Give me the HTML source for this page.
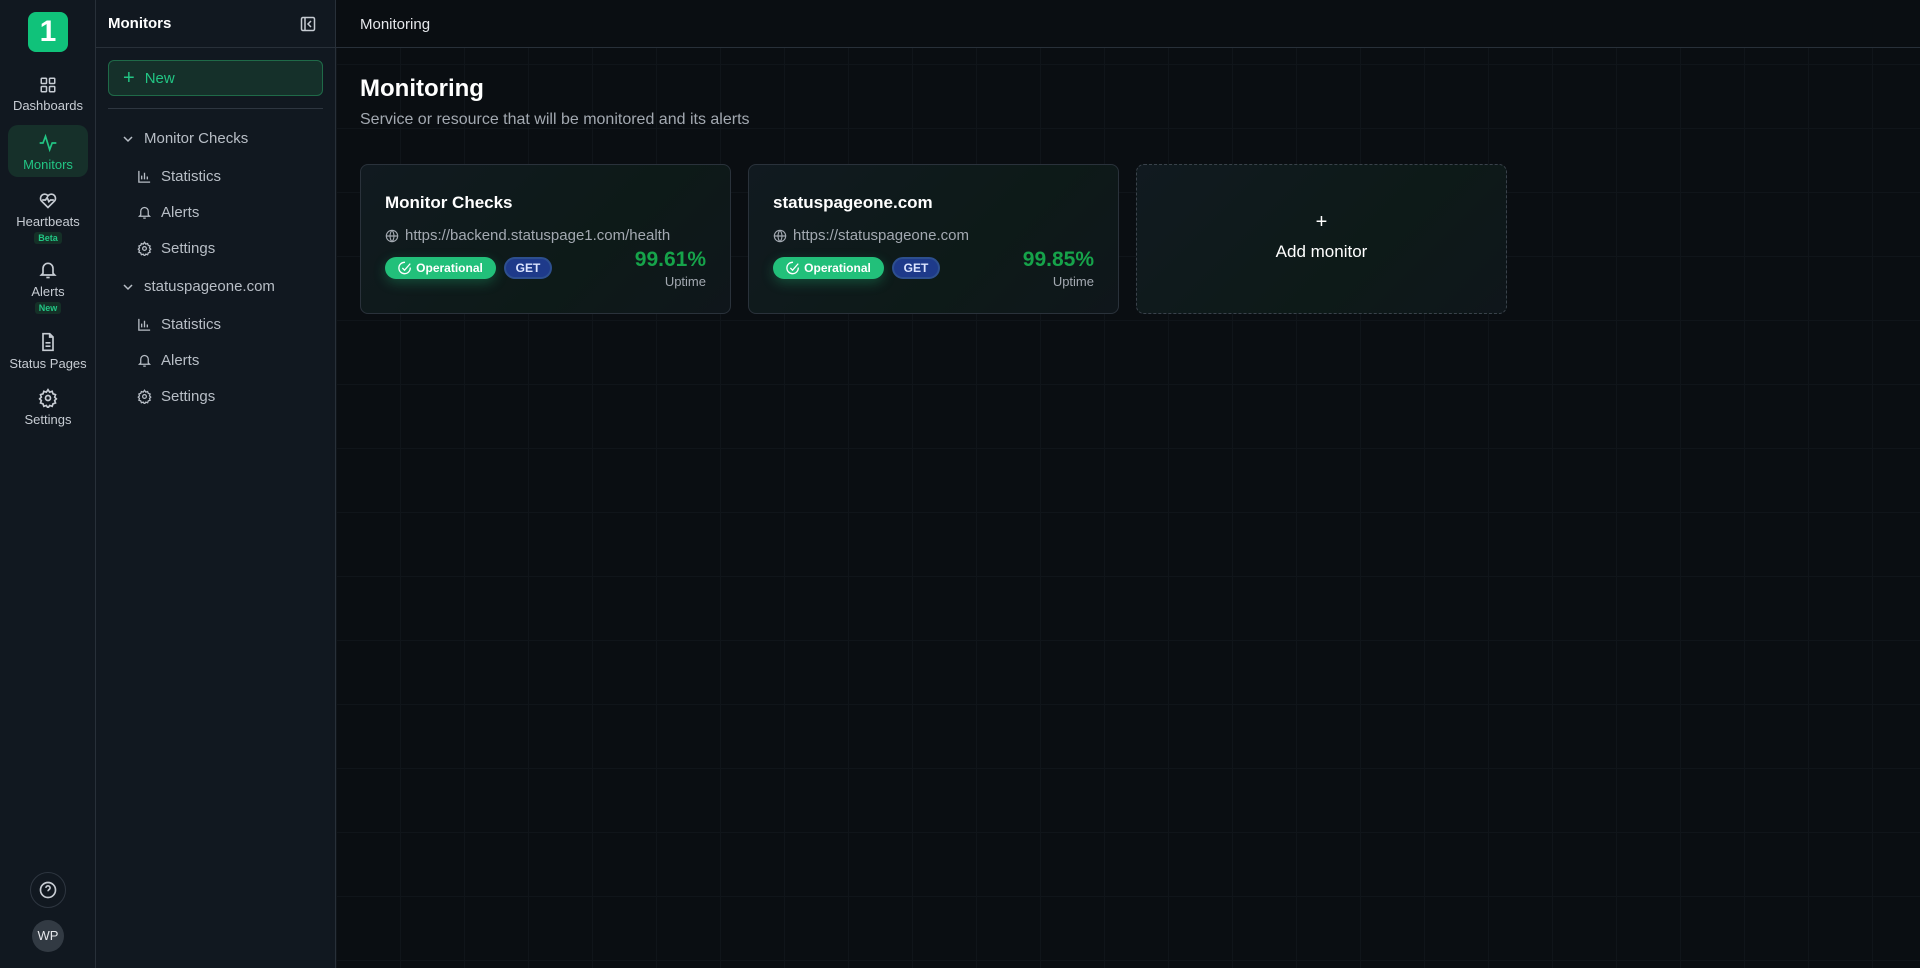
<!DOCTYPE html>
<html><head><meta charset="utf-8"><style>
*{box-sizing:border-box;margin:0;padding:0}
body{width:1920px;height:968px;overflow:hidden;background:#0a0e12;font-family:"Liberation Sans",sans-serif;color:#e5e7eb;position:relative}
.rail{position:absolute;left:0;top:0;width:96px;height:968px;background:#111820;border-right:1px solid #283039}
.logo{position:absolute;left:28px;top:12px;width:40px;height:40px;border-radius:8px;background:#10c27a;color:#fff;font-weight:bold;font-size:30px;text-align:center;line-height:40px}
.ri{position:absolute;left:8px;width:80px;text-align:center;font-size:13px;color:#c7ccd3}
.ri svg{display:block;margin:0 auto 4px}
.ri.act{background:#16302a;border-radius:10px;color:#22c584}
.bd{display:inline-block;font-size:9px;font-weight:bold;color:#22c584;background:#153027;border-radius:3px;padding:1px 4px;margin-top:2px}
.side{position:absolute;left:96px;top:0;width:240px;height:968px;background:#111820;border-right:1px solid #283039}
.main{position:absolute;left:336px;top:0;right:0;height:968px;background-color:#0a0e12;background-image:linear-gradient(#10151a 1px,transparent 1px),linear-gradient(90deg,#10151a 1px,transparent 1px);background-size:64px 64px}
.hdr{position:absolute;left:0;top:0;right:0;height:48px;border-bottom:1px solid #283039;background:#0a0e12;font-size:15px;padding:16px 24px;color:#e5e7eb}
.item{position:absolute;font-size:15px;color:#b8bec6;display:flex;align-items:center}
.card{position:absolute;top:164px;width:371px;height:150px;border:1px solid #2a323b;border-radius:8px;background:linear-gradient(135deg,#111a20,#0d1a18 60%,#0f161b)}
.ct{position:absolute;left:24px;top:28px;font-size:17px;font-weight:bold;color:#fff}
.cu{position:absolute;left:24px;top:62px;font-size:15px;color:#a3a9b1;display:flex;align-items:center;gap:6px}
.op{position:absolute;left:24px;top:92px;height:22px;width:111px;border-radius:11px;background:#22c07a;color:#fff;font-size:12px;font-weight:bold;display:flex;align-items:center;justify-content:center;gap:4px;box-shadow:0 4px 12px rgba(34,192,122,.3)}
.get{position:absolute;left:143px;top:92px;height:22px;width:48px;border-radius:11px;background:#1e3a8a;border:2px solid #2d4f8f;color:#dbe4ff;font-size:12px;font-weight:bold;text-align:center;line-height:18px}
.pc{position:absolute;right:24px;top:83px;font-size:21px;font-weight:bold;color:#16a34a}
.up{position:absolute;right:24px;top:109px;font-size:13px;color:#a3a9b1}
</style></head><body>
<div class="rail">
<div class="logo">1</div>
<div class="ri" style="top:76px"><svg width="18" height="18" viewBox="0 0 24 24" fill="none" stroke="#c7ccd3" stroke-width="2"><rect x="3" y="3" width="7" height="7" rx="1"/><rect x="14" y="3" width="7" height="7" rx="1"/><rect x="3" y="14" width="7" height="7" rx="1"/><rect x="14" y="14" width="7" height="7" rx="1"/></svg>Dashboards</div>
<div class="ri act" style="top:125px;height:52px;padding-top:8px"><svg width="20" height="20" viewBox="0 0 24 24" fill="none" stroke="#22c584" stroke-width="2"><path d="M2 12h4l3-8 5 16 3-8h5"/></svg>Monitors</div>
<div class="ri" style="top:190px"><svg width="20" height="20" viewBox="0 0 24 24" fill="none" stroke="#c7ccd3" stroke-width="2"><path d="M12 21l-8-8a5 5 0 017-7l1 1 1-1a5 5 0 017 7z"/><path d="M5 12h4l2-3 2 5 2-2h4"/></svg>Heartbeats<br><span class="bd">Beta</span></div>
<div class="ri" style="top:260px"><svg width="20" height="20" viewBox="0 0 24 24" fill="none" stroke="#c7ccd3" stroke-width="2"><path d="M6 16V10a6 6 0 0112 0v6l2 2H4z"/><path d="M10 21h4"/></svg>Alerts<br><span class="bd">New</span></div>
<div class="ri" style="top:332px"><svg width="20" height="20" viewBox="0 0 24 24" fill="none" stroke="#c7ccd3" stroke-width="2"><path d="M14 2H6v20h12V6z"/><path d="M14 2v4h4M9 13h6M9 17h6"/></svg>Status Pages</div>
<div class="ri" style="top:388px"><svg width="20" height="20" viewBox="0 0 24 24" fill="none" stroke="#c7ccd3" stroke-width="2"><circle cx="12" cy="12" r="3"/><path d="M12 2l2 3 3-1 1 3 3 1-1 3 2 2-2 2 1 3-3 1-1 3-3-1-2 3-2-3-3 1-1-3-3-1 1-3-2-2 2-2-1-3 3-1 1-3 3 1z"/></svg>Settings</div>
<div style="position:absolute;left:30px;top:872px;width:36px;height:36px;border-radius:50%;border:1px solid #2e3640;display:flex;align-items:center;justify-content:center"><svg width="20" height="20" viewBox="0 0 24 24" fill="none" stroke="#c7ccd3" stroke-width="2"><circle cx="12" cy="12" r="9"/><path d="M9.5 9.5a2.5 2.5 0 015 0c0 2-2.5 2-2.5 4M12 17h.01"/></svg></div>
<div style="position:absolute;left:32px;top:920px;width:32px;height:32px;border-radius:50%;background:#323a43;color:#e5e7eb;font-size:13px;text-align:center;line-height:32px">WP</div>
</div>
<div class="side">
<div style="position:absolute;left:12px;top:15px;font-size:15px;font-weight:bold;color:#fff">Monitors</div>
<svg style="position:absolute;left:204px;top:16px" width="16" height="16" viewBox="0 0 16 16" fill="none" stroke="#c7ccd3" stroke-width="1.5"><rect x="1.5" y="1.5" width="13" height="13" rx="1.5"/><path d="M5 2v12M11 5l-3 3 3 3"/></svg>
<div style="position:absolute;left:0;top:47px;width:240px;border-top:1px solid #283039"></div>
<div style="position:absolute;left:12px;top:60px;width:215px;height:36px;border:1px solid #1f6a48;border-radius:6px;background:#15302a;color:#22c584;font-size:15px;display:flex;align-items:center;padding-left:14px;gap:10px"><span style="font-size:20px;line-height:1">+</span>New</div>
<div style="position:absolute;left:12px;top:108px;width:215px;border-top:1px solid #2e3640"></div>
<div class="item" style="left:26px;top:130px"><svg width="12" height="12" viewBox="0 0 12 12" fill="none" stroke="#b8bec6" stroke-width="1.5" style="margin-right:10px"><path d="M2 4l4 4 4-4"/></svg>Monitor Checks</div>
<div class="item" style="left:41px;top:168px"><svg width="15" height="15" viewBox="0 0 16 16" fill="none" stroke="#b8bec6" stroke-width="1.4" style="margin-right:9px"><path d="M2 2v12h12M5 11V7M8 11V4M11 11V8"/></svg>Statistics</div>
<div class="item" style="left:41px;top:204px"><svg width="15" height="15" viewBox="0 0 24 24" fill="none" stroke="#b8bec6" stroke-width="2" style="margin-right:9px"><path d="M6 16V10a6 6 0 0112 0v6l2 2H4z"/><path d="M10 21h4"/></svg>Alerts</div>
<div class="item" style="left:41px;top:240px"><svg width="15" height="15" viewBox="0 0 24 24" fill="none" stroke="#b8bec6" stroke-width="2" style="margin-right:9px"><circle cx="12" cy="12" r="3"/><path d="M12 2l2 3 3-1 1 3 3 1-1 3 2 2-2 2 1 3-3 1-1 3-3-1-2 3-2-3-3 1-1-3-3-1 1-3-2-2 2-2-1-3 3-1 1-3 3 1z"/></svg>Settings</div>
<div class="item" style="left:26px;top:278px"><svg width="12" height="12" viewBox="0 0 12 12" fill="none" stroke="#b8bec6" stroke-width="1.5" style="margin-right:10px"><path d="M2 4l4 4 4-4"/></svg>statuspageone.com</div>
<div class="item" style="left:41px;top:316px"><svg width="15" height="15" viewBox="0 0 16 16" fill="none" stroke="#b8bec6" stroke-width="1.4" style="margin-right:9px"><path d="M2 2v12h12M5 11V7M8 11V4M11 11V8"/></svg>Statistics</div>
<div class="item" style="left:41px;top:352px"><svg width="15" height="15" viewBox="0 0 24 24" fill="none" stroke="#b8bec6" stroke-width="2" style="margin-right:9px"><path d="M6 16V10a6 6 0 0112 0v6l2 2H4z"/><path d="M10 21h4"/></svg>Alerts</div>
<div class="item" style="left:41px;top:388px"><svg width="15" height="15" viewBox="0 0 24 24" fill="none" stroke="#b8bec6" stroke-width="2" style="margin-right:9px"><circle cx="12" cy="12" r="3"/><path d="M12 2l2 3 3-1 1 3 3 1-1 3 2 2-2 2 1 3-3 1-1 3-3-1-2 3-2-3-3 1-1-3-3-1 1-3-2-2 2-2-1-3 3-1 1-3 3 1z"/></svg>Settings</div>
</div>
<div class="main">
<div class="hdr">Monitoring</div>
<div style="position:absolute;left:24px;top:75px;font-size:24px;font-weight:bold;color:#fff">Monitoring</div>
<div style="position:absolute;left:24px;top:111px;font-size:16px;color:#a3a9b1">Service or resource that will be monitored and its alerts</div>
<div class="card" style="left:24px"><div class="ct">Monitor Checks</div><div class="cu"><svg width="14" height="14" viewBox="0 0 16 16" fill="none" stroke="#a3a9b1" stroke-width="1.3"><circle cx="8" cy="8" r="6.5"/><path d="M1.5 8h13M8 1.5c-3 3.5-3 9.5 0 13M8 1.5c3 3.5 3 9.5 0 13"/></svg>https://backend.statuspage1.com/health</div><div class="op"><svg width="14" height="14" viewBox="0 0 16 16" fill="none" stroke="#fff" stroke-width="1.5"><path d="M14 7.5A6.5 6.5 0 118 1.5"/><path d="M5 8l2.5 2.5L14 3"/></svg>Operational</div><div class="get">GET</div><div class="pc">99.61%</div><div class="up">Uptime</div></div>
<div class="card" style="left:412px"><div class="ct">statuspageone.com</div><div class="cu"><svg width="14" height="14" viewBox="0 0 16 16" fill="none" stroke="#a3a9b1" stroke-width="1.3"><circle cx="8" cy="8" r="6.5"/><path d="M1.5 8h13M8 1.5c-3 3.5-3 9.5 0 13M8 1.5c3 3.5 3 9.5 0 13"/></svg>https://statuspageone.com</div><div class="op"><svg width="14" height="14" viewBox="0 0 16 16" fill="none" stroke="#fff" stroke-width="1.5"><path d="M14 7.5A6.5 6.5 0 118 1.5"/><path d="M5 8l2.5 2.5L14 3"/></svg>Operational</div><div class="get">GET</div><div class="pc">99.85%</div><div class="up">Uptime</div></div>
<div class="card" style="left:800px;border:1px dashed #3a424b;text-align:center;color:#fff"><div style="position:absolute;left:0;right:0;top:46px;font-size:20px">+</div><div style="position:absolute;left:0;right:0;top:77px;font-size:17px">Add monitor</div></div>
</div>
</body></html>
